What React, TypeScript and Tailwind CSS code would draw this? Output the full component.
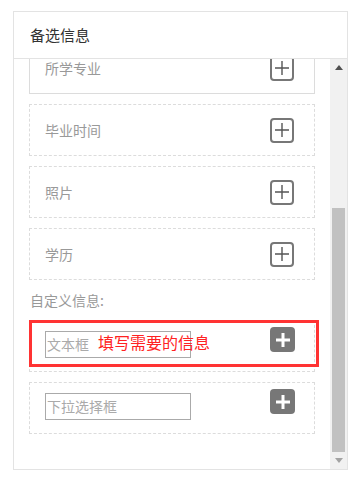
const font = { fontFamily: '"Noto Sans CJK SC", "Noto Sans", sans-serif' };

function PlusOutline() {
  return (
    <div className="flex h-[25px] w-[24px] items-center justify-center rounded-[4px] border-2 border-[#777]">
      <svg width="16" height="16" viewBox="0 0 16 16">
        <path d="M8 1v14M1 8h14" stroke="#555" strokeWidth="1.4" />
      </svg>
    </div>
  );
}

function PlusFilled() {
  return (
    <div className="flex h-[25px] w-[25px] items-center justify-center rounded-[4px] bg-[#777]">
      <svg width="16" height="16" viewBox="0 0 16 16">
        <path d="M8 1v14M1 8h14" stroke="#fff" strokeWidth="3" />
      </svg>
    </div>
  );
}

function Item({ label, solid }: { label: string; solid?: boolean }) {
  return (
    <div
      className={
        "flex h-[52px] shrink-0 items-center justify-between pl-[15px] pr-[20px] " +
        (solid ? "border border-[#dcdcdc]" : "border border-dashed border-[#dcdcdc]")
      }
    >
      <span className="text-[14px] text-[#999]">{label}</span>
      <PlusOutline />
    </div>
  );
}

function CustomItem({ placeholder, children }: { placeholder: string; children?: React.ReactNode }) {
  return (
    <div className="relative flex h-[52px] shrink-0 items-start justify-between border border-dashed border-[#dcdcdc] pl-[15px] pr-[19px] pt-[6px]">
      <div className="mt-[4px] flex h-[27px] w-[146px] items-center border border-[#aaa] px-[1px] text-[14px] text-[#aaa]">
        {placeholder}
      </div>
      <PlusFilled />
      {children}
    </div>
  );
}

export default function App() {
  return (
    <div className="min-h-screen bg-white pl-[13px] pt-[11px]" style={font}>
      <div className="flex h-[459px] w-[335px] flex-col border border-[#e3e3e3] bg-white">
        {/* header */}
        <div className="flex h-[47px] shrink-0 items-center border-b border-[#e3e3e3] pl-[16px] text-[15px] text-[#333]">
          备选信息
        </div>
        {/* body */}
        <div className="flex min-h-0 flex-1">
          <div className="flex-1 overflow-hidden">
            <div className="mt-[-17px] flex flex-col gap-[10px] px-[15px]">
              <Item label="所学专业" solid />
              <Item label="毕业时间" />
              <Item label="照片" />
              <Item label="学历" />
              <div className="h-[20px] pl-[1px] text-[14px] leading-[20px] text-[#999]">自定义信息:</div>
              <CustomItem placeholder="文本框">
                <div className="absolute left-[-1px] top-[-1px] h-[47px] w-[290px] border-[3px] border-[#f33]" />
                <span className="absolute left-[68px] top-[10px] text-[16px] leading-[22px] text-[#f22]">
                  填写需要的信息
                </span>
              </CustomItem>
              <CustomItem placeholder="下拉选择框" />
            </div>
          </div>
          {/* scrollbar */}
          <div className="flex w-[17px] shrink-0 flex-col bg-[#f1f1f1]">
            <div className="flex h-[17px] items-center justify-center">
              <svg width="8" height="5" viewBox="0 0 8 5">
                <path d="M0 5L4 0L8 5Z" fill="#505050" />
              </svg>
            </div>
            <div className="flex flex-1 flex-col justify-end px-[2px]">
              <div className="h-[244px] bg-[#c1c1c1]" />
            </div>
            <div className="flex h-[17px] items-center justify-center">
              <svg width="8" height="5" viewBox="0 0 8 5">
                <path d="M0 0L8 0L4 5Z" fill="#a3a3a3" />
              </svg>
            </div>
          </div>
        </div>
      </div>
    </div>
  );
}
